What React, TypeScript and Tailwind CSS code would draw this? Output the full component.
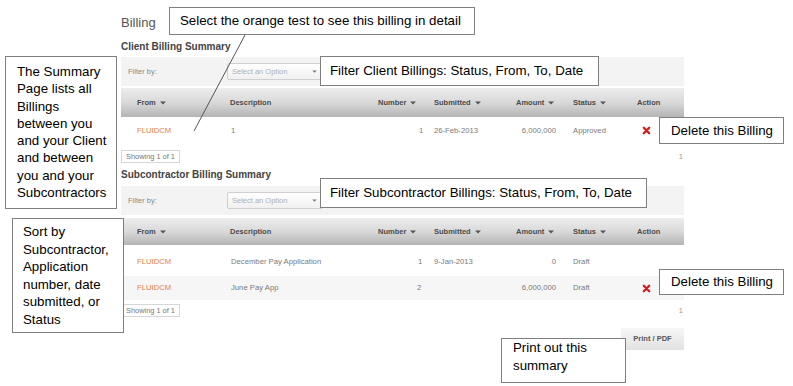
import React from "react";

const Caret = () => (
  <svg width="6" height="4" viewBox="0 0 6 4" className="ml-[4px] inline-block">
    <path d="M0 0.5h6L3 3.5z" fill="#555" />
  </svg>
);

const RedX = () => (
  <svg width="9" height="9" viewBox="0 0 9 9">
    <path d="M1.8 1.8l5.4 5.4M7.2 1.8l-5.4 5.4" stroke="#d01c1c" strokeWidth="2.3" strokeLinecap="round" />
  </svg>
);

const cols = "grid grid-cols-[105px_144px_60px_75px_55px_65px_59px]";

function HeaderRow({ h }: { h: string }) {
  return (
    <div className={`${cols} ${h} items-center bg-gradient-to-b from-[#ededed] via-[#d9d9d9] to-[#b4b4b4] text-[7.5px] font-bold text-[#4a4a4a]`}>
      <div className="pl-[16px] flex items-center">From<Caret /></div>
      <div className="pl-[4px]">Description</div>
      <div className="pl-[8px] flex items-center">Number<Caret /></div>
      <div className="pl-[4px] flex items-center">Submitted<Caret /></div>
      <div className="pl-[11px] flex items-center">Amount<Caret /></div>
      <div className="pl-[13px] flex items-center">Status<Caret /></div>
      <div className="pl-[12px]">Action</div>
    </div>
  );
}

function DataRow({
  h,
  desc,
  num,
  numPad,
  date,
  amount,
  status,
  del,
  bg,
}: {
  h: string;
  desc: string;
  num: string;
  numPad: string;
  date: string;
  amount: string;
  status: string;
  del: boolean;
  bg: string;
}) {
  return (
    <div className={`${cols} ${h} ${bg} items-center text-[7.7px] text-[#7a7a7a]`}>
      <div className="pl-[16px] text-[#ea7d45]">FLUIDCM</div>
      <div className="pl-[5px]">{desc}</div>
      <div className={numPad}>{num}</div>
      <div className="pl-[4px]">{date}</div>
      <div className="text-right pr-[4px]">{amount}</div>
      <div className="pl-[13px]">{status}</div>
      <div className="pl-[17px] flex items-center">{del ? <RedX /> : null}</div>
    </div>
  );
}

function FilterBar() {
  return (
    <div className="h-[29px] bg-[#f3f3f3] flex items-center">
      <div className="w-[106px] pl-[7px] text-[7.5px] text-[#8a8a8a]">Filter by:</div>
      <div className="w-[96px] h-[17px] border border-[#cfcfcf] rounded-[2px] bg-gradient-to-b from-white to-[#f0f0f0] flex items-center justify-between pl-[4px] pr-[5px] text-[7.5px] text-[#b0b0b0]">
        <span>Select an Option</span>
        <svg width="5" height="3" viewBox="0 0 6 4"><path d="M0 0.5h6L3 3.5z" fill="#777" /></svg>
      </div>
    </div>
  );
}

function Showing() {
  return (
    <div className="flex items-center justify-between h-[13px]">
      <div className="h-[13px] px-[4px] border border-[#d6d6d6] flex items-center text-[7.4px] text-[#777]">Showing 1 of 1</div>
      <div className="text-[7.5px] text-[#999] pr-[1px]">1</div>
    </div>
  );
}

const callout =
  "absolute border border-[#7f7f7f] bg-white text-black text-[13.3px] whitespace-nowrap";

export default function App() {
  return (
    <div
      className="relative w-[793px] h-[386px] bg-white overflow-hidden"
      style={{ fontFamily: '"Liberation Sans", Arial, sans-serif' }}
    >
      <div className="ml-[121px] w-[563px] pt-[15px] flex flex-col">
        <div className="h-[16px] leading-[16px] text-[13px] text-[#555]">Billing</div>
        <div className="mt-[10px] h-[12px] leading-[12px] text-[10px] font-bold text-[#444]">Client Billing Summary</div>
        <div className="mt-[4px]"><FilterBar /></div>
        <div className="mt-[2px]"><HeaderRow h="h-[29px]" /></div>
        <DataRow h="h-[27px]" desc="1" num="1" numPad="pl-[49px]" date="26-Feb-2013" amount="6,000,000" status="Approved" del bg="bg-white" />
        <div className="mt-[6px]"><Showing /></div>
        <div className="mt-[6px] h-[12px] leading-[12px] text-[10px] font-bold text-[#444]">Subcontractor Billing Summary</div>
        <div className="mt-[5px]"><FilterBar /></div>
        <div className="mt-[3px]"><HeaderRow h="h-[27px]" /></div>
        <DataRow h="h-[31px] pt-[3px]" desc="December Pay Application" num="1" numPad="pl-[48px]" date="9-Jan-2013" amount="0" status="Draft" del={false} bg="bg-white" />
        <DataRow h="h-[24px]" desc="June Pay App" num="2" numPad="pl-[47px]" date="" amount="6,000,000" status="Draft" del bg="bg-[#f6f6f6]" />
        <div className="mt-[4px]"><Showing /></div>
        <div className="mt-[11px] flex justify-end">
          <div className="w-[63px] h-[22px] flex items-center justify-center bg-gradient-to-b from-[#f7f7f7] to-[#e1e1e1] text-[7.5px] font-bold text-[#555]">
            Print / PDF
          </div>
        </div>
      </div>

      <svg className="absolute inset-0 pointer-events-none" width="793" height="386">
        <line x1="245" y1="35" x2="194" y2="131" stroke="#555" strokeWidth="1" />
      </svg>

      <div className={`${callout} left-[169px] top-[7px] w-[306px] h-[28px] pl-[10px] flex items-center`}>
        Select the orange test to see this billing in detail
      </div>

      <div className={`${callout} left-[5px] top-[56px] w-[112px] h-[153px] pl-[11px] pt-[6px] leading-[17.3px]`}>
        The Summary<br />Page lists all<br />Billings<br />between you<br />and your Client<br />and between<br />you and your<br />Subcontractors
      </div>

      <div className={`${callout} left-[320px] top-[56px] w-[279px] h-[30px] pl-[9px] flex items-center`}>
        Filter Client Billings: Status, From, To, Date
      </div>

      <div className={`${callout} left-[659px] top-[117px] w-[125px] h-[27px] pl-[11px] flex items-center`}>
        Delete this Billing
      </div>

      <div className={`${callout} left-[320px] top-[178px] w-[327px] h-[30px] pl-[9px] flex items-center`}>
        Filter Subcontractor Billings: Status, From, To, Date
      </div>

      <div className={`${callout} left-[12px] top-[218px] w-[112px] h-[115px] pl-[10px] pt-[4px] leading-[17.5px]`}>
        Sort by<br />Subcontractor,<br />Application<br />number, date<br />submitted, or<br />Status
      </div>

      <div className={`${callout} left-[659px] top-[269px] w-[125px] h-[26px] pl-[11px] flex items-center`}>
        Delete this Billing
      </div>

      <div className={`${callout} left-[501px] top-[338px] w-[125px] h-[45px] pl-[11px] pt-[0px] leading-[18px]`}>
        Print out this<br />summary
      </div>
    </div>
  );
}
